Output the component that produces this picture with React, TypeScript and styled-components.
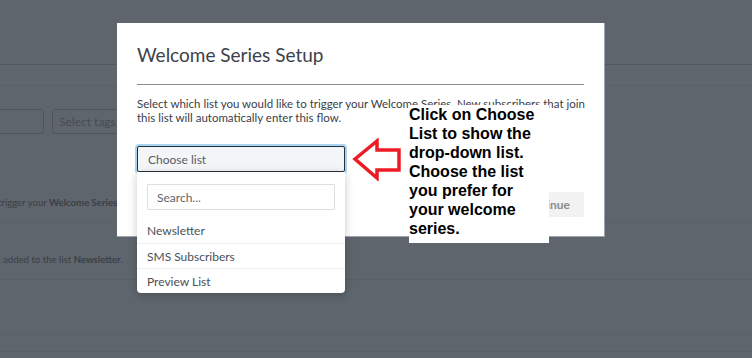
import React from "react";
import styled, { createGlobalStyle } from "styled-components";

const GlobalStyle = createGlobalStyle`
  html, body {
    margin: 0;
    padding: 0;
    background: #5f656d;
  }
  * {
    box-sizing: border-box;
  }
`;

const lists = ["Newsletter", "SMS Subscribers", "Preview List"];

const hintLines = [
  "Click on Choose",
  "List to show the",
  "drop-down list.",
  "Choose the list",
  "you prefer for",
  "your welcome",
  "series.",
];

export default function App() {
  return (
    <>
      <GlobalStyle />
      <Page>
        <Backdrop>
          <TopBar />
          <SubBar />
          <FilterRow>
            <GhostInput width={144} />
            <GhostInput width={160}>Select tags</GhostInput>
          </FilterRow>
          <BackRow height={53} pad={26}>
            <BackText offset={-2}>
              trigger your <strong>Welcome Series</strong>
            </BackText>
          </BackRow>
          <BackRow height={57} pad={30}>
            <BackText offset={3}>
              added to the list <strong>Newsletter</strong>.
            </BackText>
          </BackRow>
          <BackRow height={55} pad={0} />
          <BackRow height={17} pad={0} />
        </Backdrop>

        <Modal>
          <Title>Welcome Series Setup</Title>
          <Divider />
          <Description>
            Select which list you would like to trigger your Welcome Series. New subscribers that join
            <br />
            this list will automatically enter this flow.
          </Description>
          <SelectBox>Choose list</SelectBox>
          <Footer>
            <ContinueButton>Continue</ContinueButton>
          </Footer>

          <Dropdown>
            <SearchInput placeholder="Search..." />
            <OptionList>
              {lists.map((name) => (
                <Option key={name}>{name}</Option>
              ))}
            </OptionList>
          </Dropdown>
        </Modal>

        <Arrow viewBox="0 0 50 43" width={50} height={43}>
          <polygon
            points="3,21 25,3 25,12 47,12 47,32 25,32 25,40"
            fill="none"
            stroke="#ed1c24"
            strokeWidth={3.5}
            strokeLinejoin="miter"
          />
        </Arrow>

        <Hint>
          {hintLines.map((line) => (
            <HintLine key={line}>{line}</HintLine>
          ))}
        </Hint>
      </Page>
    </>
  );
}

const Page = styled.div`
  position: relative;
  width: 752px;
  height: 358px;
  overflow: hidden;
  background: #5f656d;
  font-family: Lato, "Liberation Sans", sans-serif;
`;

const Backdrop = styled.div`
  display: flex;
  flex-direction: column;
`;

const TopBar = styled.div`
  height: 65px;
  border-bottom: 1px solid #545960;
`;

const SubBar = styled.div`
  height: 18px;
  border-bottom: 1px solid #646a72;
  background: #60666e;
`;

const FilterRow = styled.div`
  display: flex;
  gap: 8px;
  margin-left: -100px;
  padding-top: 26px;
  height: 87px;
`;

const GhostInput = styled.div<{ width: number }>`
  width: ${({ width }) => width}px;
  height: 25px;
  border: 1px solid #50555c;
  border-radius: 3px;
  padding: 0 6px;
  display: flex;
  align-items: center;
  font-size: 12px;
  color: #474c53;
`;

const BackRow = styled.div<{ height: number; pad: number }>`
  height: ${({ height }) => height}px;
  padding-top: ${({ pad }) => pad}px;
  border-bottom: 1px solid #5a6068;
  display: flex;
  align-items: flex-start;
`;

const BackText = styled.div<{ offset: number }>`
  margin-left: ${({ offset }) => offset}px;
  font-size: 9.6px;
  line-height: 14px;
  color: #3a3f46;
  white-space: nowrap;

  strong {
    font-weight: 700;
  }
`;

const Modal = styled.div`
  position: absolute;
  left: 117px;
  top: 23px;
  width: 488px;
  height: 214px;
  background: #fff;
  border-right: 1px solid #9ea3a9;
  border-bottom: 1px solid #9ea3a9;
  padding: 20px 20px 0 20px;
  display: flex;
  flex-direction: column;
`;

const Title = styled.h2`
  margin: 0;
  font-size: 19px;
  line-height: 24px;
  font-weight: 400;
  color: #3c414b;
`;

const Divider = styled.div`
  height: 1px;
  background: #8c8f96;
  margin: 17px 0 12px;
`;

const Description = styled.p`
  margin: 0;
  font-size: 11.5px;
  line-height: 14px;
  color: #3b4049;
  white-space: nowrap;
`;

const SelectBox = styled.div`
  margin-top: 21px;
  width: 208px;
  height: 26px;
  border: 1.5px solid #27303b;
  border-radius: 2px;
  background: #f4f5f7;
  box-shadow: 0 0 0 2px #a9d4ef;
  padding: 0 10px;
  display: flex;
  align-items: center;
  font-size: 12px;
  color: #555c66;
`;

const Footer = styled.div`
  display: flex;
  justify-content: flex-end;
  margin-top: 20px;
`;

const ContinueButton = styled.button`
  height: 25px;
  padding: 0 14px;
  border: none;
  border-radius: 2px;
  background: #f2f2f2;
  color: #8b8b8b;
  font-family: Lato, "Liberation Sans", sans-serif;
  font-size: 12px;
  font-weight: 700;
`;

const Dropdown = styled.div`
  position: absolute;
  left: 20px;
  top: 149px;
  width: 208px;
  background: #fff;
  border-radius: 0 0 4px 4px;
  box-shadow: 0 2px 8px rgba(0, 0, 0, 0.22);
  padding-top: 12px;
`;

const SearchInput = styled.input`
  display: block;
  margin: 0 10px 8px;
  width: 188px;
  height: 26px;
  border: 1px solid #dcdfe3;
  border-radius: 1px;
  padding: 0 9px;
  font-family: Lato, "Liberation Sans", sans-serif;
  font-size: 12px;
  outline: none;

  &::placeholder {
    color: #5f646b;
  }
`;

const OptionList = styled.div`
  display: flex;
  flex-direction: column;
`;

const Option = styled.div`
  height: 25px;
  padding: 0 10px;
  display: flex;
  align-items: center;
  font-size: 12px;
  color: #4a4f57;

  & + & {
    border-top: 1px solid #eceef0;
  }
`;

const Arrow = styled.svg`
  position: absolute;
  left: 352px;
  top: 138px;
`;

const Hint = styled.div`
  position: absolute;
  left: 409px;
  top: 105px;
  width: 140px;
  height: 138px;
  background: #fff;
  font-family: "Liberation Sans", Arial, sans-serif;
  font-weight: 700;
  font-size: 16px;
  line-height: 19px;
  color: #000;
`;

const HintLine = styled.div`
  white-space: nowrap;
`;
